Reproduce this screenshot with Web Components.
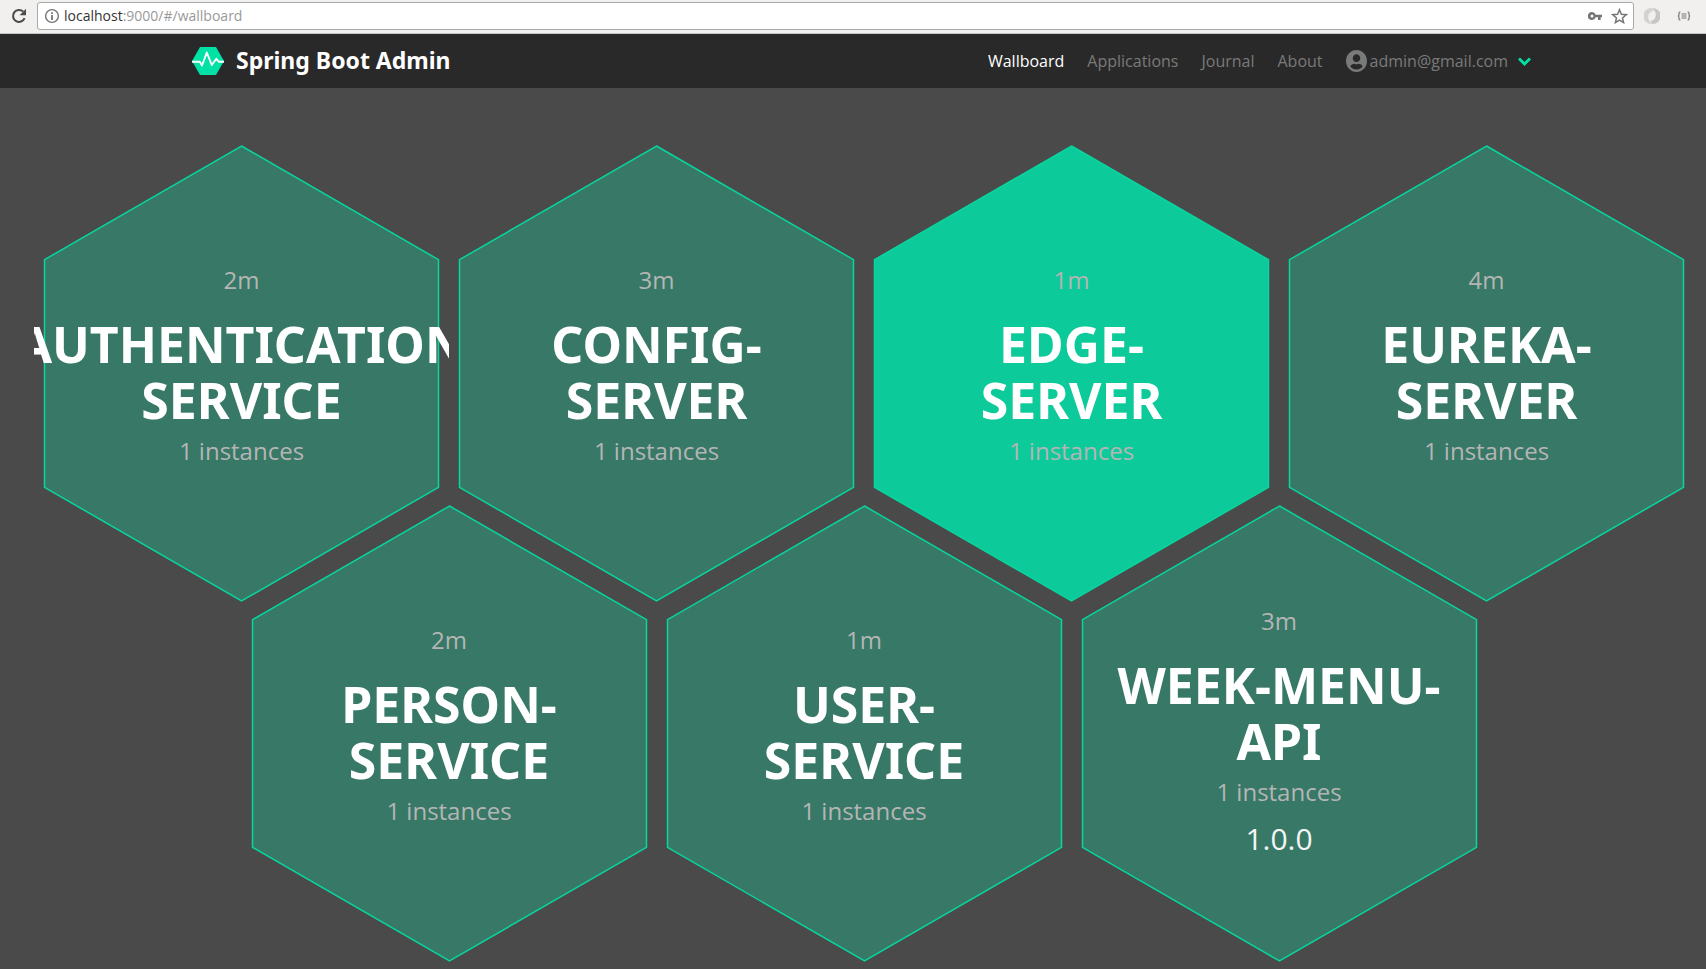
<!DOCTYPE html>
<html lang="en">
<head>
<meta charset="utf-8">
<title>Spring Boot Admin</title>
<style>
  body { margin: 0; background: #4a4a4a; font-family: "Open Sans", "Noto Sans", sans-serif; }
</style>
</head>
<body>
<browser-toolbar host="localhost" rest=":9000/#/wallboard"></browser-toolbar>
<sba-navbar>
  <sba-brand slot="brand">Spring Boot Admin</sba-brand>
  <sba-nav-link active>Wallboard</sba-nav-link>
  <sba-nav-link>Applications</sba-nav-link>
  <sba-nav-link>Journal</sba-nav-link>
  <sba-nav-link>About</sba-nav-link>
  <sba-user-menu>admin@gmail.com</sba-user-menu>
</sba-navbar>
<sba-wallboard>
  <sba-hex-row>
    <sba-hexagon uptime="2m" instances="1">AUTHENTICATION<br>SERVICE</sba-hexagon>
    <sba-hexagon uptime="3m" instances="1">CONFIG-<br>SERVER</sba-hexagon>
    <sba-hexagon uptime="1m" instances="1" selected>EDGE-<br>SERVER</sba-hexagon>
    <sba-hexagon uptime="4m" instances="1">EUREKA-<br>SERVER</sba-hexagon>
  </sba-hex-row>
  <sba-hex-row>
    <sba-hexagon uptime="2m" instances="1">PERSON-<br>SERVICE</sba-hexagon>
    <sba-hexagon uptime="1m" instances="1">USER-<br>SERVICE</sba-hexagon>
    <sba-hexagon uptime="3m" instances="1" version="1.0.0">WEEK-MENU-<br>API</sba-hexagon>
  </sba-hex-row>
</sba-wallboard>
<script>
const define = (name, html) => customElements.define(name, class extends HTMLElement {
  constructor() {
    super();
    this.attachShadow({ mode: 'open' }).innerHTML = html(this);
  }
});

define('browser-toolbar', el => `
  <style>
    :host { display: flex; align-items: center; box-sizing: border-box; height: 34px; padding: 0 14px 2px 10px; background: #f1f0ef; border-bottom: 1px solid #c4c8c2; font-size: 14px; }
    svg { display: block; flex: none; }
    button { all: unset; display: block; }
    .box { flex: 1; display: flex; align-items: center; height: 28px; box-sizing: border-box; margin: 0 10px 0 9px; padding: 0 5px 0 6px; background: #fff; border: 1px solid #a9a9a9; border-radius: 3px; gap: 8px; }
    .site { display: flex; align-items: center; flex: 1; gap: 4px; }
    .url { line-height: 20px; color: #999; }
    .url b { font-weight: 400; color: #333; }
    .ext { display: flex; align-items: center; gap: 16px; }
  </style>
  <button aria-label="Reload"><svg width="18" height="18" viewBox="0 0 18 18"><path d="M14.6 11.2A6 6 0 1 1 13.2 4.6" fill="none" stroke="#4c4c4c" stroke-width="2.1"/><path d="M16 1.8v6.4H9.6z" fill="#4c4c4c"/></svg></button>
  <div class="box">
    <div class="site">
      <svg width="16" height="16" viewBox="0 0 16 16"><circle cx="8" cy="8" r="6.4" fill="none" stroke="#757575" stroke-width="1.4"/><path d="M7.1 4.2h1.8v1.7H7.1zM7.1 7h1.8v5H7.1z" fill="#757575"/></svg>
      <div class="url"><b>${el.getAttribute('host')}</b>${el.getAttribute('rest')}</div>
    </div>
    <svg width="16" height="16" viewBox="0 0 16 16"><path d="M5 4a4 4 0 1 0 3.700 5.300H11V12h2.600V9.300H15V6.700H8.700A4 4 0 0 0 5 4zm0 2.500a1.500 1.500 0 1 1 0 3 1.500 1.500 0 0 1 0-3z" fill="#757575" fill-rule="evenodd"/></svg>
    <button aria-label="Bookmark"><svg width="17" height="16" viewBox="0 0 17 16"><path d="M8.500 1.800l1.900 4.500 4.800.4-3.700 3.200 1.100 4.700-4.100-2.500-4.100 2.500 1.100-4.700L1.800 6.700l4.800-.4z" fill="none" stroke="#757575" stroke-width="1.500"/></svg></button>
  </div>
  <div class="ext">
    <svg width="16" height="16" viewBox="0 0 16 16"><path d="M7.500 0A8 8 0 0 0 4.500 15.500Q7 16 8 15.500 3.500 12 4.300 8 5 4 9 3.300 8.800 1 7.500 0z" fill="#d2d2d2"/><path d="M8.500 16A8 8 0 0 0 11.500 .5Q9 0 8 .5 12.500 4 11.700 8 11 12 7 12.700 7.200 15 8.500 16z" fill="#c6c6c6"/></svg>
    <svg width="16" height="16" viewBox="0 0 16 16"><path d="M4.500 4H3.800Q3 4 3 5v1.700Q3 8 1.800 8 3 8 3 9.300V11q0 1 .8 1h.7M11.500 4h.7q.8 0 .8 1v1.700Q13 8 14.200 8 13 8 13 9.300V11q0 1-.8 1h-.7M5.500 6h5M5.500 8h5M5.500 10h5" fill="none" stroke="#777" stroke-width="1.200"/></svg>
  </div>`);

define('sba-navbar', () => `
  <style>
    :host { display: block; background: #292929; }
    header { display: flex; align-items: center; justify-content: space-between; height: 54px; padding: 0 175px 0 192px; }
    nav { display: flex; align-items: center; gap: 23px; }
  </style>
  <header><slot name="brand"></slot><nav><slot></slot></nav></header>`);

define('sba-brand', () => `
  <style>
    :host { display: block; }
    a { display: flex; align-items: center; gap: 12px; color: #fff; text-decoration: none; font: 700 23px/32px "Noto Sans", sans-serif; }
    span { padding-bottom: 2px; }
    svg { display: block; }
  </style>
  <a href="#/"><svg width="32" height="28" viewBox="0 0 32 28"><path d="M8 0h16l8 14-8 14H8L0 14z" fill="#00e1a5"/><path d="M0 14.800h7.800L10 18.500 14.800 5.500l5 12.500 4.500-6.200 2.700 3h5" fill="none" stroke="#fff" stroke-width="1.900" stroke-linejoin="round"/></svg><span><slot></slot></span></a>`);

define('sba-nav-link', () => `
  <style>
    :host { display: block; }
    a { color: #7a7a7a; text-decoration: none; font-size: 16px; line-height: 24px; }
    :host([active]) a { color: #fff; }
  </style>
  <a href="#/"><slot></slot></a>`);

define('sba-user-menu', () => `
  <style>
    :host { display: block; }
    button { all: unset; display: flex; align-items: center; color: #7a7a7a; font-size: 16px; line-height: 24px; }
    svg { display: block; }
    .user { margin-right: 3px; }
    .arrow { margin-left: 10px; }
  </style>
  <button>
    <svg class="user" width="21" height="22" viewBox="0 0 496 496" preserveAspectRatio="none"><path fill="#7a7a7a" d="M248 0C111 0 0 111 0 248s111 248 248 248 248-111 248-248S385 0 248 0zm0 96c48.600 0 88 39.400 88 88s-39.400 88-88 88-88-39.400-88-88 39.400-88 88-88zm0 344c-58.700 0-111.300-26.600-146.500-68.200 18.800-35.400 55.600-59.800 98.500-59.800 2.400 0 4.800.4 7.100 1.100 13 4.200 26.600 6.900 40.900 6.900s28-2.700 40.900-6.900c2.300-.7 4.700-1.100 7.100-1.100 42.900 0 79.700 24.400 98.500 59.800C359.300 413.400 306.700 440 248 440z"/></svg>
    <slot></slot>
    <svg class="arrow" width="13" height="9" viewBox="0 0 13 9"><path d="M1 1.500l5.500 5.500L12 1.500" fill="none" stroke="#00e1a5" stroke-width="2.800"/></svg>
  </button>`);

define('sba-wallboard', () => `
  <style>:host { display: block; padding: 57px 12px 0 34px; }</style>
  <main><slot></slot></main>`);

/* Rows interlock: each one climbs into the gaps between the tips above it. */
define('sba-hex-row', () => `
  <style>
    :host { display: flex; justify-content: center; }
    :host(:not(:first-child)) { margin-top: calc(100% * -97 / 1660); }
  </style>
  <slot></slot>`);

define('sba-hexagon', el => `
  <style>
    :host { display: grid; flex: 0 0 25%; min-width: 0; aspect-ratio: 415 / 457; overflow: hidden; color: #b5b5b5; text-align: center; --fill: #377966; }
    :host([selected]) { --fill: #0dca9a; }
    svg, .body { grid-area: 1 / 1; min-width: 0; }
    svg { display: block; width: 100%; }
    polygon { fill: var(--fill); stroke: #08d69f; stroke-width: 1.500; }
    .body { display: flex; flex-direction: column; align-items: center; justify-content: center; padding-bottom: 6px; font-size: 24px; }
    .uptime { line-height: 36px; margin-bottom: 18px; }
    h1 { margin: 0; color: #fff; font: 700 50px/56px "Noto Sans", sans-serif; white-space: nowrap; }
    .instances { line-height: 46px; margin-bottom: 5px; }
    .version { color: #f5f5f5; font-size: 30px; line-height: 38px; }
  </style>
  <svg viewBox="0 0 415 457"><polygon points="207.500,1 404.500,114.700 404.500,342.300 207.500,456 10.500,342.300 10.500,114.700"/></svg>
  <div class="body">
    <div class="uptime">${el.getAttribute('uptime')}</div>
    <h1><slot></slot></h1>
    <div class="instances">${el.getAttribute('instances')} instances</div>
    ${el.hasAttribute('version') ? `<div class="version">${el.getAttribute('version')}</div>` : ''}
  </div>`);
</script>
</body>
</html>
